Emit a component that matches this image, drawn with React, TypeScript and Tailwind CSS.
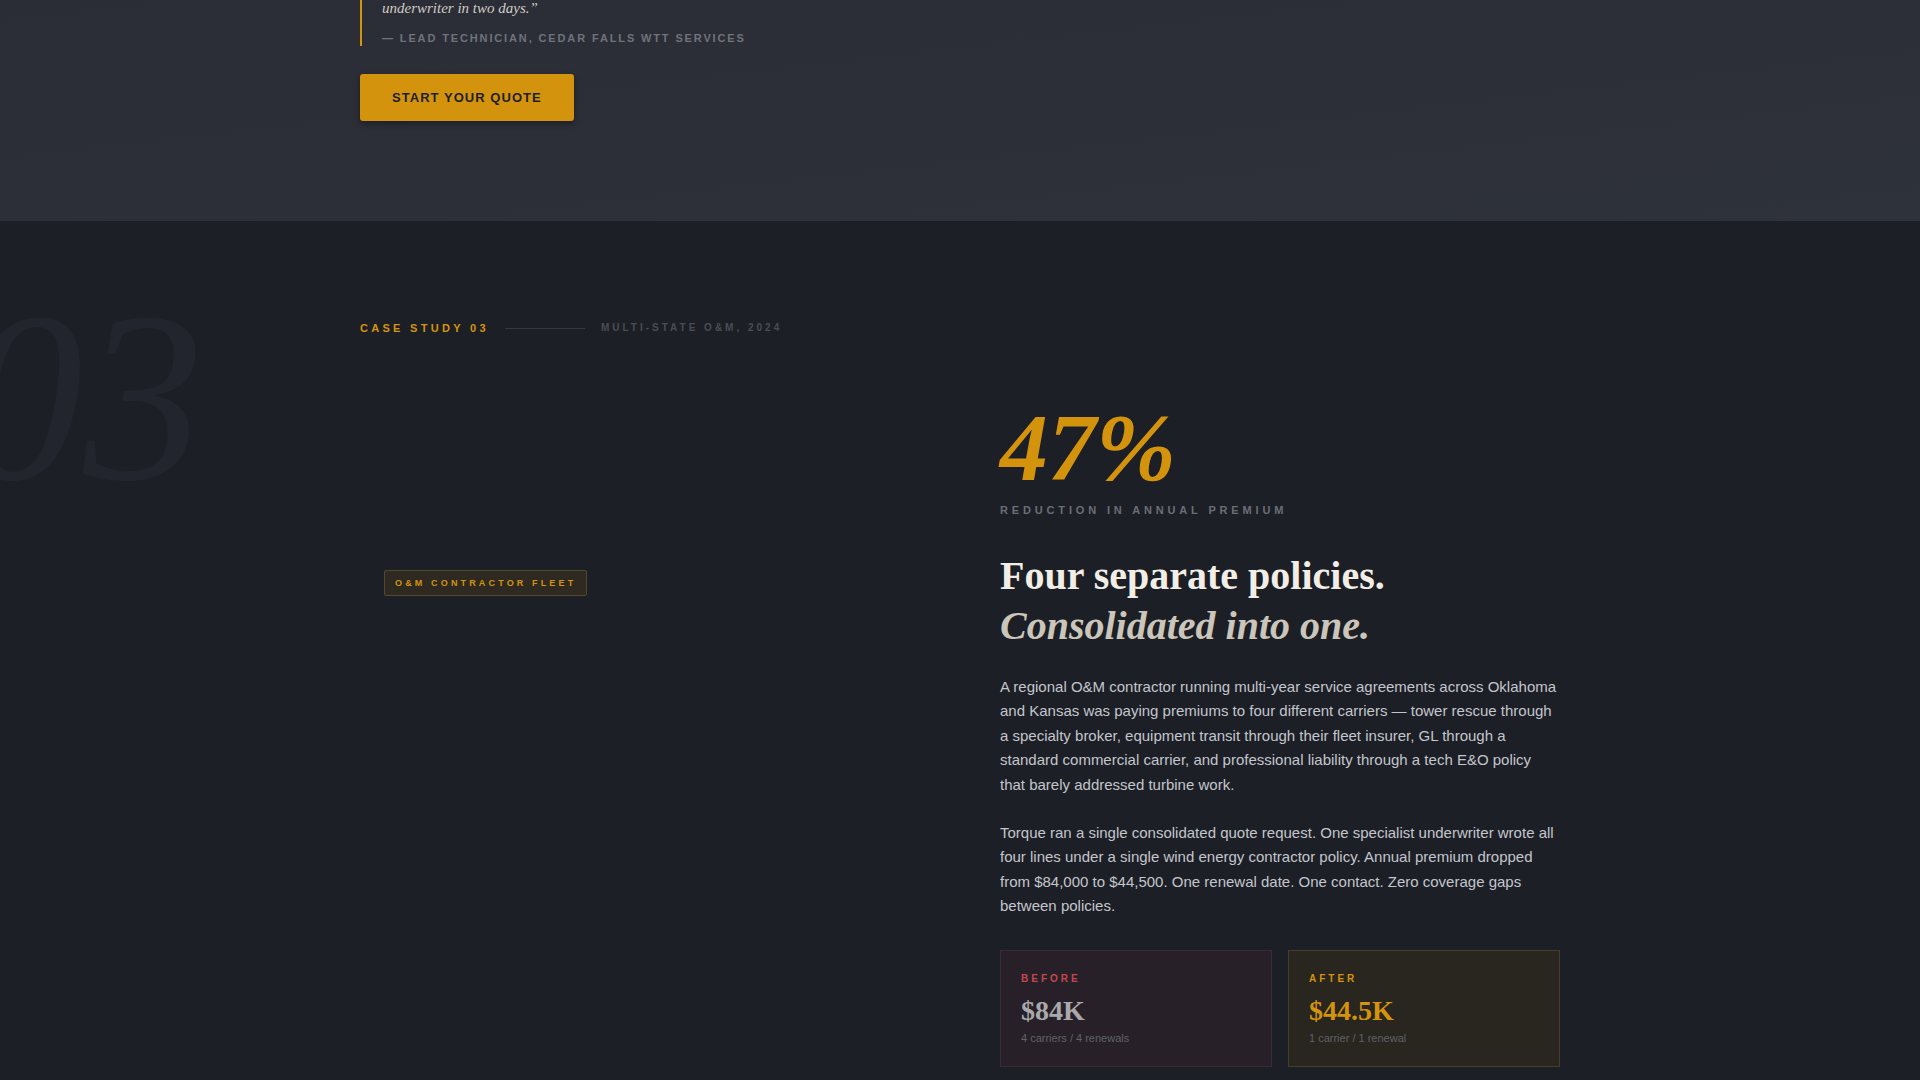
const stats = [
  {
    label: 'Before',
    value: '$84K',
    note: '4 carriers / 4 renewals',
    box: 'border-[#3a2a31] bg-[#282028]',
    labelColor: 'text-[#c4474f]',
    valueColor: 'text-[#a9a9ab]',
  },
  {
    label: 'After',
    value: '$44.5K',
    note: '1 carrier / 1 renewal',
    box: 'border-[#483d28] bg-[#29251f]',
    labelColor: 'text-[#d4930d]',
    valueColor: 'text-[#d4930d]',
  },
];

export default function App() {
  return (
    <div className="min-h-screen bg-[#1c1f26] font-['Liberation_Sans',Arial,sans-serif]">
      {/* end of the previous case study */}
      <section className="bg-gradient-to-br from-[#2a2d36] via-[#2c2f38] to-[#2e323b] pb-[100px]">
        <div className="mx-auto max-w-[1200px]">
          <blockquote className="border-l-2 border-[#d4930d] pl-5">
            <p className="font-['Liberation_Serif',serif] text-[15px] italic leading-4 text-[#cfccc4]">
              underwriter in two days.”
            </p>
            <p className="mt-3.5 text-[11px] font-bold uppercase leading-4 tracking-[0.17em] text-[#6f737c]">
              — Lead Technician, Cedar Falls WTT Services
            </p>
          </blockquote>
          <button className="mt-7 rounded-[3px] bg-[#d4930d] px-8 py-4 text-[13px] font-bold uppercase leading-[15px] tracking-[0.08em] text-[#1c1f26] shadow-[0_3px_6px_rgba(0,0,0,0.35)]">
            Start Your Quote
          </button>
        </div>
      </section>

      {/* case study 03 */}
      <section className="relative overflow-hidden pb-24 pt-[99px]">
        <span
          aria-hidden
          className="pointer-events-none absolute left-[-38px] top-[55px] select-none font-['Liberation_Serif',serif] text-[242px] italic leading-none text-[#22252d]"
        >
          03
        </span>

        <div className="relative mx-auto max-w-[1200px]">
          <div className="flex items-center gap-4">
            <span className="text-[11px] font-bold uppercase leading-4 tracking-[0.3em] text-[#d4930d]">
              Case Study 03
            </span>
            <span className="h-px w-20 bg-[#353841]" />
            <span className="text-[10px] font-bold uppercase leading-4 tracking-[0.3em] text-[#4a4d55]">
              Multi-State O&amp;M, 2024
            </span>
          </div>

          <div className="mt-16 grid grid-cols-2 gap-20">
            {/* photo area */}
            <div className="pl-6 pt-[169px]">
              <span className="inline-block rounded-[2px] border border-[#55472a] bg-[#2e2a22] px-2.5 py-1.5 text-[9px] font-bold uppercase leading-3 tracking-[0.35em] text-[#d4930d]">
                O&amp;M Contractor Fleet
              </span>
            </div>

            <div>
              <div className="font-['Liberation_Serif',serif] text-[96px] font-bold italic leading-none text-[#d4930d]">
                47%
              </div>
              <div className="mt-1.5 text-[11px] font-bold uppercase leading-4 tracking-[0.35em] text-[#6b6e75]">
                Reduction in annual premium
              </div>

              <h2 className="mt-[33px] font-['Liberation_Serif',serif] text-[40px] font-bold leading-[1.25] text-[#f2eee6]">
                Four separate policies.
                <span className="block italic text-[#cbc5ba]">Consolidated into one.</span>
              </h2>

              <p className="mt-6 max-w-[560px] text-[15px] leading-[1.625] text-[#c4c6cc]">
                A regional O&amp;M contractor running multi-year service agreements across Oklahoma and
                Kansas was paying premiums to four different carriers — tower rescue through a specialty
                broker, equipment transit through their fleet insurer, GL through a standard commercial
                carrier, and professional liability through a tech E&amp;O policy that barely addressed
                turbine work.
              </p>
              <p className="mt-6 max-w-[560px] text-[15px] leading-[1.625] text-[#c4c6cc]">
                Torque ran a single consolidated quote request. One specialist underwriter wrote all four
                lines under a single wind energy contractor policy. Annual premium dropped from $84,000 to
                $44,500. One renewal date. One contact. Zero coverage gaps between policies.
              </p>

              <div className="mt-8 grid max-w-[560px] grid-cols-2 gap-4">
                {stats.map((s) => (
                  <div key={s.label} className={`border p-5 ${s.box}`}>
                    <div className={`text-[10px] font-bold uppercase leading-[15px] tracking-[0.3em] ${s.labelColor}`}>
                      {s.label}
                    </div>
                    <div className={`mt-2 font-['Liberation_Serif',serif] text-[28px] font-bold leading-[1.2] ${s.valueColor}`}>
                      {s.value}
                    </div>
                    <div className="mt-0.5 text-[11px] leading-4 text-[#5f6268]">{s.note}</div>
                  </div>
                ))}
              </div>
            </div>
          </div>
        </div>
      </section>
    </div>
  );
}
